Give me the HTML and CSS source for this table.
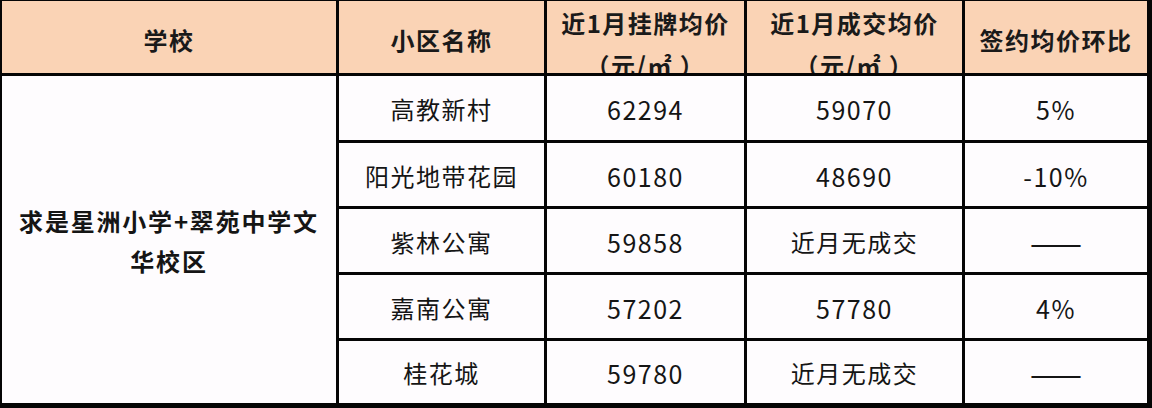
FILE: index.html
```html
<!DOCTYPE html>
<html lang="zh-CN">
<head>
<meta charset="utf-8">
<title>学校 小区均价</title>
<link rel="stylesheet" href="styles.css">
</head>
<body>
<div class="table">
  <div class="cell head"><span class="h1">学校</span></div>
  <div class="cell head"><span class="h1">小区名称</span></div>
  <div class="cell head top"><span class="h2">近1月挂牌均价<br>（元/㎡ ）</span></div>
  <div class="cell head top"><span class="h2">近1月成交均价<br>（元/㎡ ）</span></div>
  <div class="cell head"><span class="h1">签约均价环比</span></div>

  <div class="cell school"><span class="sname">求是星洲小学+翠苑中学文<br>华校区</span></div>

  <div class="cell"><span class="cn">高教新村</span></div>
  <div class="cell"><span class="num">62294</span></div>
  <div class="cell"><span class="num">59070</span></div>
  <div class="cell"><span class="num">5%</span></div>

  <div class="cell"><span class="cn">阳光地带花园</span></div>
  <div class="cell"><span class="num">60180</span></div>
  <div class="cell"><span class="num">48690</span></div>
  <div class="cell"><span class="num">-10%</span></div>

  <div class="cell"><span class="cn">紫林公寓</span></div>
  <div class="cell"><span class="num">59858</span></div>
  <div class="cell"><span class="cn">近月无成交</span></div>
  <div class="cell"><span class="dash">——</span></div>

  <div class="cell"><span class="cn">嘉南公寓</span></div>
  <div class="cell"><span class="num">57202</span></div>
  <div class="cell"><span class="num">57780</span></div>
  <div class="cell"><span class="num">4%</span></div>

  <div class="cell"><span class="cn">桂花城</span></div>
  <div class="cell"><span class="num">59780</span></div>
  <div class="cell"><span class="cn">近月无成交</span></div>
  <div class="cell"><span class="dash">——</span></div>
</div>
</body>
</html>
```

FILE: styles.css
```css
html, body {
  margin: 0;
  padding: 0;
  background: #ffffff;
}

body {
  font-family: "Noto Sans CJK SC", "Noto Sans", sans-serif;
  color: #151515;
}

.table {
  display: grid;
  grid-template-columns: 334px 205px 197px 215px 182px;
  grid-template-rows: 72px 64px 63px 63px 63px 62px;
  gap: 3px;
  width: 1152px;
  height: 408px;
  box-sizing: border-box;
  padding: 1px 5px 5px 2px;
  background: #050505;
}

.cell {
  background: #fefcfe;
  display: flex;
  align-items: center;
  justify-content: center;
  text-align: center;
  overflow: hidden;
}

.head {
  background: #fad3b5;
  font-weight: 700;
  color: #1a1a1a;
}

.head.top {
  align-items: flex-start;
}

.h1 {
  font-size: 24px;
  line-height: 32px;
  letter-spacing: 1.5px;
  padding-top: 6px;
}

.h2 {
  font-size: 24px;
  line-height: 42px;
  letter-spacing: 1.5px;
  padding-top: 1px;
  white-space: nowrap;
}

.school {
  grid-row: 2 / span 5;
  grid-column: 1;
}

.sname {
  font-size: 24px;
  font-weight: 700;
  line-height: 40px;
  letter-spacing: 1.8px;
  padding-top: 2px;
}

.cn {
  font-size: 24px;
  line-height: 30px;
  letter-spacing: 1.5px;
  padding-top: 2px;
}

.num {
  font-size: 25px;
  line-height: 30px;
  letter-spacing: 1.5px;
  padding-top: 2px;
}

.dash {
  font-size: 31px;
  line-height: 30px;
  letter-spacing: 0;
  padding-top: 2px;
}
```
